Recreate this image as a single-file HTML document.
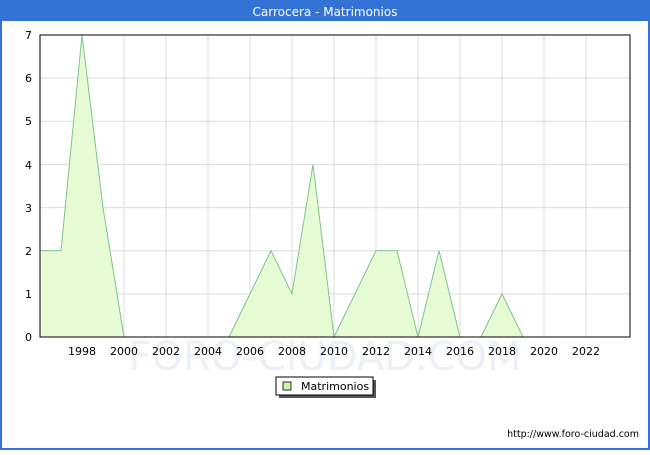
<!DOCTYPE html>
<html><head><style>body{margin:0;width:650px;height:450px;overflow:hidden;background:#fff}</style></head><body>
<svg width="650" height="450" xmlns="http://www.w3.org/2000/svg" font-family="'DejaVu Sans',sans-serif">
<rect x="0" y="0" width="650" height="450" fill="#3373d5"/>
<rect x="2" y="21" width="646" height="427" fill="#fff"/>
<text x="325" y="16" fill="#fff" font-size="12" text-anchor="middle">Carrocera - Matrimonios</text>
<text x="325" y="370" fill="#eef0f8" font-size="40" text-anchor="middle">FORO-CIUDAD.COM</text>
<g stroke="#dcdcdc" stroke-width="1">
<line x1="40" y1="293.9" x2="630" y2="293.9"/><line x1="40" y1="250.7" x2="630" y2="250.7"/><line x1="40" y1="207.6" x2="630" y2="207.6"/><line x1="40" y1="164.4" x2="630" y2="164.4"/><line x1="40" y1="121.3" x2="630" y2="121.3"/><line x1="40" y1="78.1" x2="630" y2="78.1"/>
<line x1="82" y1="35" x2="82" y2="337"/><line x1="124" y1="35" x2="124" y2="337"/><line x1="166" y1="35" x2="166" y2="337"/><line x1="208" y1="35" x2="208" y2="337"/><line x1="250" y1="35" x2="250" y2="337"/><line x1="292" y1="35" x2="292" y2="337"/><line x1="334" y1="35" x2="334" y2="337"/><line x1="376" y1="35" x2="376" y2="337"/><line x1="418" y1="35" x2="418" y2="337"/><line x1="460" y1="35" x2="460" y2="337"/><line x1="502" y1="35" x2="502" y2="337"/><line x1="544" y1="35" x2="544" y2="337"/><line x1="586" y1="35" x2="586" y2="337"/>
</g>
<polygon fill="#e4fcd0" fill-opacity="0.9" stroke="#7cc48c" stroke-width="1" points="40,337 40,250.7 61,250.7 82,35 103,207.6 124,337 229,337 250,293.9 271,250.7 292,293.9 313,164.4 334,337 355,293.9 376,250.7 397,250.7 418,337 439,250.7 460,337 481,337 502,293.9 523,337"/>
<rect x="40" y="35" width="590" height="302" fill="none" stroke="#000" stroke-width="1"/>
<g font-size="11" fill="#000" text-anchor="end">
<text x="32" y="341">0</text><text x="32" y="298">1</text><text x="32" y="255">2</text><text x="32" y="212">3</text><text x="32" y="169">4</text><text x="32" y="125">5</text><text x="32" y="82">6</text><text x="32" y="39">7</text>
</g>
<g font-size="11" fill="#000" text-anchor="middle">
<text x="82" y="355">1998</text><text x="124" y="355">2000</text><text x="166" y="355">2002</text><text x="208" y="355">2004</text><text x="250" y="355">2006</text><text x="292" y="355">2008</text><text x="334" y="355">2010</text><text x="376" y="355">2012</text><text x="418" y="355">2014</text><text x="460" y="355">2016</text><text x="502" y="355">2018</text><text x="544" y="355">2020</text><text x="586" y="355">2022</text>
</g>
<rect x="279" y="380" width="97" height="18" fill="#555"/>
<rect x="276" y="377" width="97" height="18" fill="#fff" stroke="#000" stroke-width="1"/>
<rect x="283" y="382" width="8" height="8" fill="#ccf5a8" stroke="#000" stroke-width="0.8"/>
<text x="301" y="390" font-size="11" fill="#000">Matrimonios</text>
<text x="639" y="437" font-size="9.5" fill="#000" text-anchor="end">http://www.foro-ciudad.com</text>
</svg>
</body></html>
